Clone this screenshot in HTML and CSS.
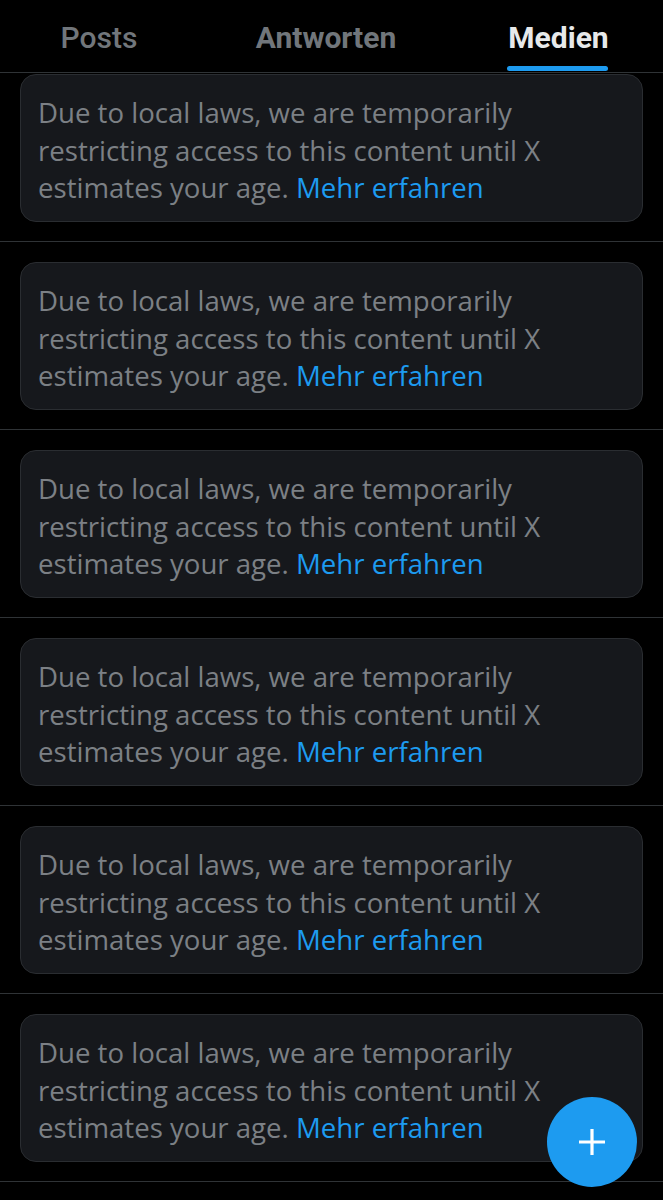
FILE: index.html
```html
<!DOCTYPE html>
<html lang="de">
<head>
    <meta charset="UTF-8">
    <meta name="viewport" content="width=device-width, initial-scale=1.0">
    <title>Medien</title>
    <link rel="stylesheet" href="styles.css">
</head>
<body>
    <nav class="tabs">
        <div class="tab">Posts</div>
        <div class="tab tab-bold">Antworten</div>
        <div class="tab tab-active">Medien</div>
    </nav>

    <div class="feed">
        <div class="row first">
            <p class="notice">Due to local laws, we are temporarily restricting access to this content until X estimates your age. <a href="#">Mehr erfahren</a></p>
        </div>
        <div class="row">
            <p class="notice">Due to local laws, we are temporarily restricting access to this content until X estimates your age. <a href="#">Mehr erfahren</a></p>
        </div>
        <div class="row">
            <p class="notice">Due to local laws, we are temporarily restricting access to this content until X estimates your age. <a href="#">Mehr erfahren</a></p>
        </div>
        <div class="row">
            <p class="notice">Due to local laws, we are temporarily restricting access to this content until X estimates your age. <a href="#">Mehr erfahren</a></p>
        </div>
        <div class="row">
            <p class="notice">Due to local laws, we are temporarily restricting access to this content until X estimates your age. <a href="#">Mehr erfahren</a></p>
        </div>
        <div class="row">
            <p class="notice">Due to local laws, we are temporarily restricting access to this content until X estimates your age. <a href="#">Mehr erfahren</a></p>
        </div>
    </div>

    <button class="fab" type="button">
        <svg width="30" height="30" viewBox="0 0 30 30">
            <path d="M15 2v26M2 15h26" stroke="#fff" stroke-width="3.2" fill="none"/>
        </svg>
    </button>
</body>
</html>
```

FILE: styles.css
```css
body {
    margin: 0;
    background: #000;
    font-family: "Open Sans", Arial, sans-serif;
    overflow: hidden;
}
.tabs {
    display: grid;
    grid-template-columns: 198px 256px 1fr;
    height: 72px;
    border-bottom: 1px solid #2f3336;
}
.tab {
    display: flex;
    align-items: center;
    justify-content: center;
    font-family: Roboto, Arial, sans-serif;
    font-size: 30px;
    font-weight: 500;
    color: #71767b;
    padding-top: 2px;
    position: relative;
}
.tab-bold {
    font-weight: 700;
}
.tab-active {
    font-weight: 700;
    color: #e7e9ea;
}
.tab-active::after {
    content: "";
    position: absolute;
    left: 50%;
    bottom: 1px;
    width: 101px;
    height: 5px;
    margin-left: -52px;
    border-radius: 3px;
    background: #1d9bf0;
}
.row {
    padding: 20px 20px 19px;
    border-bottom: 1px solid #2f3336;
}
.row.first {
    padding-top: 1px;
}
.notice {
    margin: 0;
    box-sizing: content-box;
    padding: 19px 17px 0;
    height: 127px;
    background: #16181c;
    border: 1px solid #2a2d31;
    border-radius: 16px;
    color: #7c8085;
    font-size: 27.6px;
    line-height: 37.5px;
}
.notice a {
    color: #1d9bf0;
    text-decoration: none;
}
.fab {
    position: absolute;
    left: 547px;
    top: 1097px;
    width: 90px;
    height: 90px;
    border: none;
    border-radius: 50%;
    background: #1d9bf0;
    display: flex;
    align-items: center;
    justify-content: center;
    padding: 0;
}
```
